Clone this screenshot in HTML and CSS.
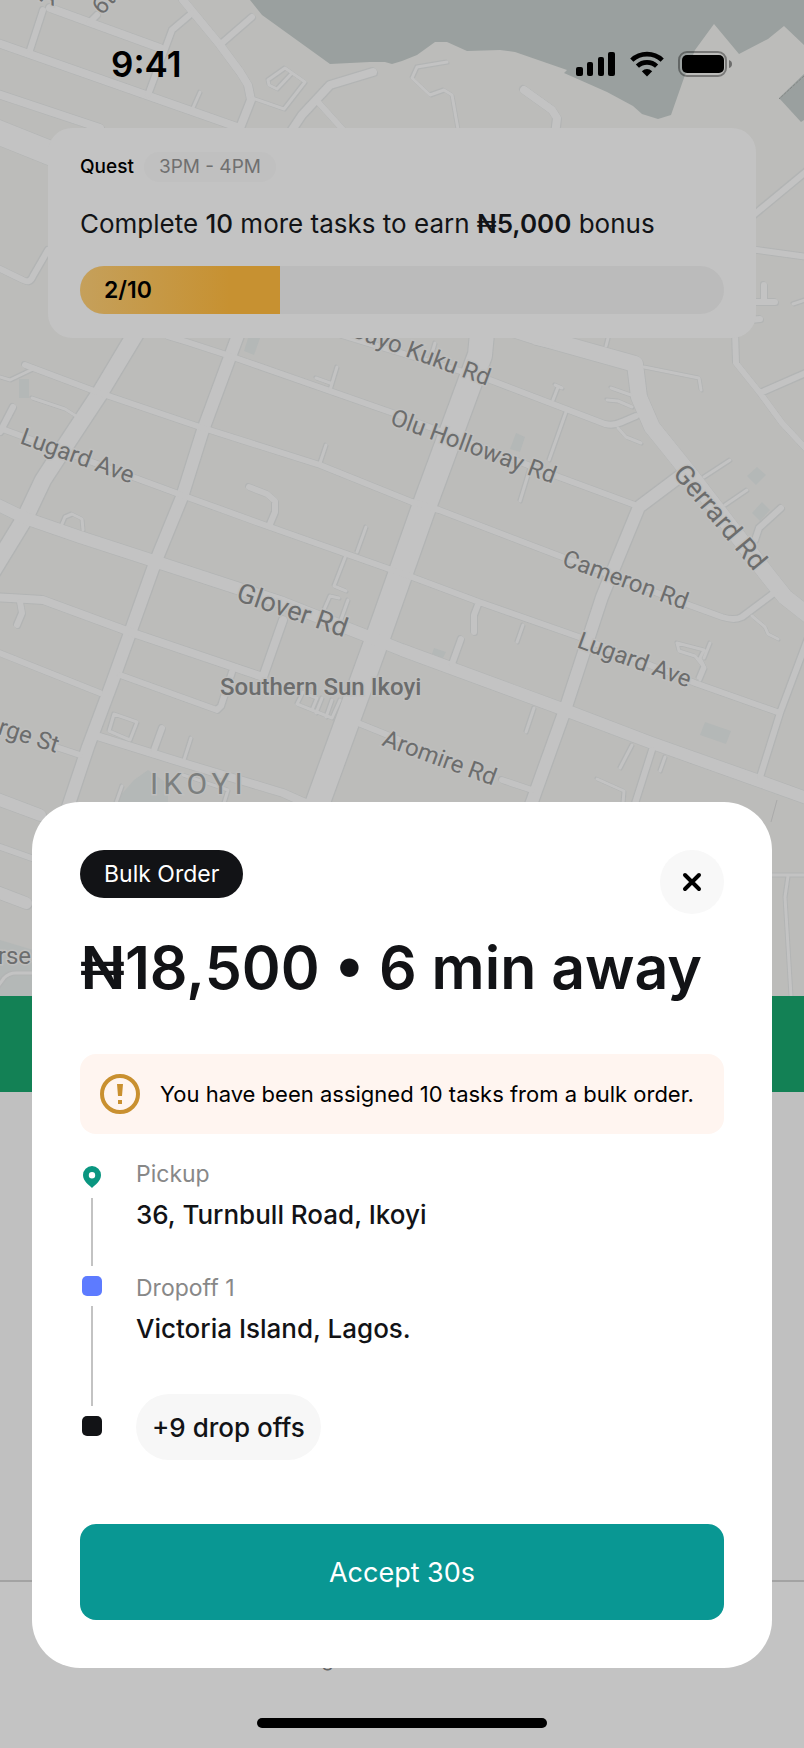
FILE: index.html
```html
<!DOCTYPE html>
<html lang="en">
<head>
<meta charset="utf-8">
<meta name="viewport" content="width=device-width, initial-scale=1">
<title>Bulk Order</title>
<link rel="stylesheet" href="styles.css">
</head>
<body>
<div class="screen">
  <div class="backdrop" aria-hidden="true">
    <svg class="map" viewBox="0 0 804 996" preserveAspectRatio="xMidYMin slice">
      <defs>
        <g id="roads" fill="none" stroke-linejoin="round" stroke-linecap="round">
          <g class="w25"><path d="M-10 129L70 161M485 300L480 355L424 507L377 640L314 813"/></g>
          <g class="w16"><path d="M150 310L133 338L100 393L67 443L43 480L25 518L-8 572M500 325L535 336L635 364L639 397L652 427L689 473L769 577L785 597L812 618"/></g>
          <g class="w13"><path d="M247 310L237 338L203 430L182 497L155 563L130 633L112 683L88 747L66 813M-8 502L25 518L80 537L157 562L283 603L377 640L402 650L565 710L652 743L762 782L812 800M679 477L639 507L602 597L565 710L528 813M-8 797L40 815M-8 890L26 903"/></g>
          <g class="w9"><path d="M100 737L190 765L283 793L310 805M-8 41L240 128M-8 92L100 128M50 8L160 48M183 0L220 45L240 72L248 85L251 100L240 128M-8 597L10 598L43 600L130 632L263 677L283 620M373 72L330 85L302 115L290 133M524 90L552 110L557 118L555 135"/></g>
          <g class="w7"><path d="M5 430L187 497L270 527L412 577L479 602L579 637L695 683L780 713M25 365L97 392L200 427L320 465L412 502L439 510L562 557L689 605L722 617Q735 621 742 617L774 593M167 336L187 342L227 355L393 413L559 477L635 505M318 328L490 380L605 424Q614 426 622 422L636 416M735 330L736 363L760 393L782 423L808 451M760 393L808 372M808 638L780 713L760 777M20 602L22 613L17 625M-8 650L100 693M120 675L217 710L221 706L232 672M50 745L80 755M358 723L400 740M502 780L532 790M43 10L30 50M97 15L90 22M252 17L222 43M192 13L172 30L148 95M318 102L345 132M808 170L750 218M750 249L808 257M-8 265L23 280Q30 284 33 276L48 250M764 285V302M750 302H775M750 320L760 319M-8 844L40 861M13 407L0 432M249 487L267 494L275 501L275 512L270 524M162 728L154 750M461 639L452 664M479 602L474 615L474 632M781 508L759 528L755 540M652 750L632 813"/></g>
          <g class="w3"><path d="M0 377L10 380L33 369M32 398L65 409L76 416M337 367L330 390M316 378L330 383M326 445L320 463M366 527L357 552M346 555L334 586L346 591M348 600L338 628M323 612L330 596L339 598M62 524L65 517L72 514L82 519L83 530M114 714L137 722L130 740L109 731ZM191 738L184 760M122 786L116 803M192 110L200 92M252 98L284 109L305 82L285 68L268 80L269 85L277 89L292 73M447 62L417 67L412 78L430 95L444 90L452 95L459 135M534 343L553 347M606 346L610 330M555 385L562 388M558 387L553 400M566 412L549 460M531 465L520 501M644 367L699 378L701 390M611 388L631 395M607 400L618 401L632 407M618 428L626 437L641 443M704 477L730 460M725 505L747 490M523 625L517 642M534 708L526 732M632 745L620 768M665 757L660 771M597 779L624 791L623 803M752 616L765 627L768 634L778 639M677 643L679 651L695 656L703 666L698 678M677 643L704 650L700 658L705 668L700 680M710 643L704 658M303 692L297 704L332 718L340 700M309 695L317 698L312 710M322 698L316 713M332 700L326 717M793 304L808 299M-4 989L4 978Q9 973 16 973H40M765 875H804M788 876L785 897L791 996M435 343L430 360M183 775L228 790L224 803"/></g>
        </g>
      </defs>
      <rect width="804" height="996" fill="#bcbcba"/>
      <path fill="#9aa09f" d="M250 0L262 15L330 64L370 62L385 62L392 64L402 61L417 55L435 42H447L467 51L500 50L515 52L567 70L564 73L607 92L633 106L642 114L658 119L671 115L685 75L695 50L714 24L739 54L768 39L784 26L804 45V0Z"/>
      <path fill="#9aa09f" d="M804 74L779 98L801 122L804 120Z"/>
      <path stroke="#858886" stroke-dasharray="3 1" d="M804 76L779 99"/>
      <g fill="#b4b8b7">
        <path d="M19 379H29V398H19ZM248 338H260L254 355L244 351ZM516 433L525 437L520 452L510 449ZM747 476L757 467L766 475L756 485ZM752 513L762 502L770 510L760 521ZM705 722L731 731L726 744L700 735ZM434 648L446 652L443 658L432 654ZM120 796L134 780L148 770L168 784V804H117ZM0 940L40 952V996H0Z"/>
      </g>
      <use href="#roads" class="casing"/>
      <use href="#roads" class="surface"/>
      <path stroke="#aaa" d="M777 800L771 822"/>
      <g class="labels">
        <text transform="translate(19 443) rotate(20)">Lugard Ave</text>
        <text class="large" transform="translate(235 600) rotate(19)">Glover Rd</text>
        <text class="place" x="220" y="695">Southern Sun Ikoyi</text>
        <text class="district" x="150" y="794">IKOYI</text>
        <text transform="translate(389 424) rotate(20)">Olu Holloway Rd</text>
        <text transform="translate(561 565) rotate(20)">Cameron Rd</text>
        <text transform="translate(576 647) rotate(20)">Lugard Ave</text>
        <text class="large" transform="translate(672 474) rotate(50)">Gerrard Rd</text>
        <text transform="translate(381 745) rotate(20)">Aromire Rd</text>
        <text class="end" transform="translate(487 386) rotate(20)">Bayo Kuku Rd</text>
        <text class="end" transform="translate(56 753) rotate(18)">George St</text>
        <text class="end" x="31" y="964">Course</text>
        <text transform="translate(102 16) rotate(-48)">6th</text>
        <text class="end" transform="translate(54 6) rotate(20)">A</text>
      </g>
    </svg>
    <div class="band"></div>
    <div class="pane"></div>
    <div class="footer"><span>g</span></div>
  </div>

  <div class="front">
    <header class="status">
      <time>9:41</time>
      <div class="status-icons">
        <svg width="40" height="26" viewBox="0 0 40 26" role="img" aria-label="Signal"><rect x="0" y="16" width="7" height="9" rx="2"/><rect x="11" y="11" width="6" height="14" rx="2"/><rect x="22" y="6" width="6" height="19" rx="2"/><rect x="32" y="1" width="7" height="24" rx="2"/></svg>
        <svg width="34" height="26" viewBox="0 0 34 26" role="img" aria-label="Wi-Fi"><g fill="none" stroke="#000" stroke-width="4.6"><path d="M1.800 9.200A22 22 0 0 1 32.200 9.200"/><path d="M7.400 15.200A14 14 0 0 1 26.600 15.200"/></g><path d="M17 25.500L11.800 20.200Q17 15.800 22.200 20.200Z"/></svg>
        <svg width="56" height="26" viewBox="0 0 56 26" role="img" aria-label="Battery"><rect x="1" y="1" width="47" height="24" rx="8" fill="none" stroke="#000" stroke-opacity=".36" stroke-width="2"/><rect x="4" y="4" width="42" height="18" rx="5"/><path d="M51 9Q54 10 54 13T51 17Z" fill-opacity=".42"/></svg>
      </div>
    </header>

    <section class="quest">
      <div class="quest-head"><span>Quest</span><span class="quest-time">3PM - 4PM</span></div>
      <p class="quest-text">Complete <b class="mid">10</b> more tasks to earn <b>₦5,000</b> bonus</p>
      <div class="progress" role="progressbar" aria-valuenow="2" aria-valuemin="0" aria-valuemax="10" aria-label="Quest progress">
        <div class="progress-fill">2/10</div>
      </div>
    </section>

    <main class="sheet" role="dialog" aria-labelledby="offer">
      <div class="sheet-head">
        <span class="badge">Bulk Order</span>
        <button class="close" type="button" aria-label="Close"><svg width="20" height="20" viewBox="0 0 20 20"><path d="M3 3L17 17M17 3L3 17" stroke="#000" stroke-width="4" stroke-linecap="round"/></svg></button>
      </div>
      <h1 id="offer">₦18,500 • 6 min away</h1>
      <div class="notice">
        <svg width="40" height="40" viewBox="0 0 40 40" aria-hidden="true"><circle cx="20" cy="20" r="18" fill="none" stroke="#c99030" stroke-width="4"/><path fill="#c99030" d="M17 10H23L22 22H18ZM18 26H22V30H18Z"/></svg>
        <p>You have been assigned 10 tasks from a bulk order.</p>
      </div>
      <div class="route">
        <div class="rail" aria-hidden="true">
          <svg width="20" height="22" viewBox="0 0 20 22"><path fill="#0a9680" fill-rule="evenodd" d="M10 0A9 9 0 0 1 19 9C19 15 13 19 10 22C7 19 1 15 1 9A9 9 0 0 1 10 0ZM10 6A3.200 3.200 0 1 0 10 12.400A3.200 3.200 0 1 0 10 6Z"/></svg>
          <i class="line"></i>
          <i class="stop blue"></i>
          <i class="line long"></i>
          <i class="stop"></i>
        </div>
        <div class="stops">
          <div><div class="label">Pickup</div><div class="value">36, Turnbull Road, Ikoyi</div></div>
          <div><div class="label">Dropoff 1</div><div class="value">Victoria Island, Lagos.</div></div>
          <button class="more" type="button">+9 drop offs</button>
        </div>
      </div>
      <button class="accept" type="button">Accept 30s</button>
    </main>
    <div class="home"></div>
  </div>
</div>
</body>
</html>
```
FILE: styles.css
```css
* { box-sizing: border-box; }
body { margin: 0; background: #c3c3c3; color: #121316; font-family: Inter, "Liberation Sans", sans-serif; }
p, h1 { margin: 0; }
button { border: 0; padding: 0; font: inherit; color: inherit; cursor: pointer; }
svg { flex: none; display: block; }

.screen { display: grid; min-height: 100vh; overflow: hidden; }
.backdrop, .front { grid-area: 1 / 1; min-width: 0; display: flex; flex-direction: column; }

.map { width: 100%; height: 996px; }
.band { height: 96px; background: #138155; }
.pane { flex: 1; background: #c0c0c0; }
.footer { height: 168px; border-top: 2px solid #a3a3a3; padding: 64px 0 0 40%; background: #c3c3c3; font-size: 20px; line-height: 26px; color: #666; }

.w25 { stroke-width: 24px; }
.w16 { stroke-width: 16px; }
.w13 { stroke-width: 12px; }
.w9 { stroke-width: 8px; }
.w7 { stroke-width: 6px; }
.w3 { stroke-width: 3px; }
.surface { stroke: #c3c3c3; }
.casing { stroke: #b2b4b4; filter: drop-shadow(1px 1px 0 #b2b4b4) drop-shadow(-1px -1px 0 #b2b4b4); }
.labels { font-family: Roboto, "Noto Sans", sans-serif; font-size: 24px; fill: #6c6d6d; stroke: #bfbfbe; stroke-width: 3px; paint-order: stroke; }
.large { font-size: 27px; }
.place { font-weight: 500; }
.district { font-size: 30px; letter-spacing: 5px; fill: #7c7f7f; }
.end { text-anchor: end; }

.status { height: 128px; padding: 0 70px 0 111px; display: flex; justify-content: space-between; align-items: center; }
.status time { font-size: 35px; font-weight: 600; color: #000; line-height: 40px; }
.status-icons { display: flex; gap: 14px; align-items: center; }

.quest { margin: 0 48px; padding: 24px 32px; border-radius: 24px; background: #c3c3c3; display: flex; flex-direction: column; gap: 24px; }
.quest-head { display: flex; align-items: center; gap: 10px; font-size: 19px; line-height: 30px; font-weight: 500; color: #000; }
.quest-time { padding: 0 15px; border-radius: 15px; background: #c0c0c0; color: #707070; font-weight: 400; }
.quest-text { font-size: 26px; line-height: 36px; }
.quest-text b { font-weight: 600; }
.quest-text .mid { font-weight: 500; }
.progress { height: 48px; border-radius: 24px; background: #bbb; overflow: hidden; }
.progress-fill { width: 31%; height: 100%; padding-left: 24px; background: linear-gradient(90deg, #c5a05b, #c79131 75%); color: #000; font-size: 23px; line-height: 48px; font-weight: 600; }

.sheet { margin: 464px 32px 0; padding: 48px; border-radius: 48px; background: #fff; display: flex; flex-direction: column; }
.sheet-head { display: flex; justify-content: space-between; align-items: flex-start; }
.badge { padding: 0 24px; border-radius: 24px; background: #121316; color: #fff; font-size: 23px; line-height: 48px; }
.close { width: 64px; height: 64px; border-radius: 50%; background: #f8f8f8; display: grid; place-items: center; }
.sheet h1 { margin: 16px 0 48px; font-size: 59px; line-height: 76px; font-weight: 600; white-space: nowrap; }
.notice { min-height: 80px; padding: 0 20px; border-radius: 16px; background: #fff5f0; display: flex; align-items: center; gap: 20px; font-size: 22px; line-height: 32px; color: #000; }
.route { margin: 24px 0 64px; display: flex; gap: 34px; }
.rail { padding: 8px 0 0 2px; display: flex; flex-direction: column; align-items: center; gap: 10px; }
.line { width: 2px; height: 68px; background: #c3c3c3; }
.long { height: 100px; }
.stop { width: 20px; height: 20px; border-radius: 5px; background: #121316; }
.blue { background: #5d7bff; }
.stops { display: flex; flex-direction: column; align-items: flex-start; gap: 40px; }
.label { font-size: 23px; line-height: 32px; color: #888; }
.value { margin-top: 8px; font-size: 26px; line-height: 34px; font-weight: 500; }
.more { margin-top: 8px; height: 66px; padding: 0 16px; border-radius: 33px; background: #f7f7f7; font-size: 26px; font-weight: 500; }
.accept { height: 96px; border-radius: 16px; background: #099793; color: #fff; font-size: 27px; }
.home { width: 36%; height: 10px; margin: 50px auto 20px; border-radius: 5px; background: #000; }
```
